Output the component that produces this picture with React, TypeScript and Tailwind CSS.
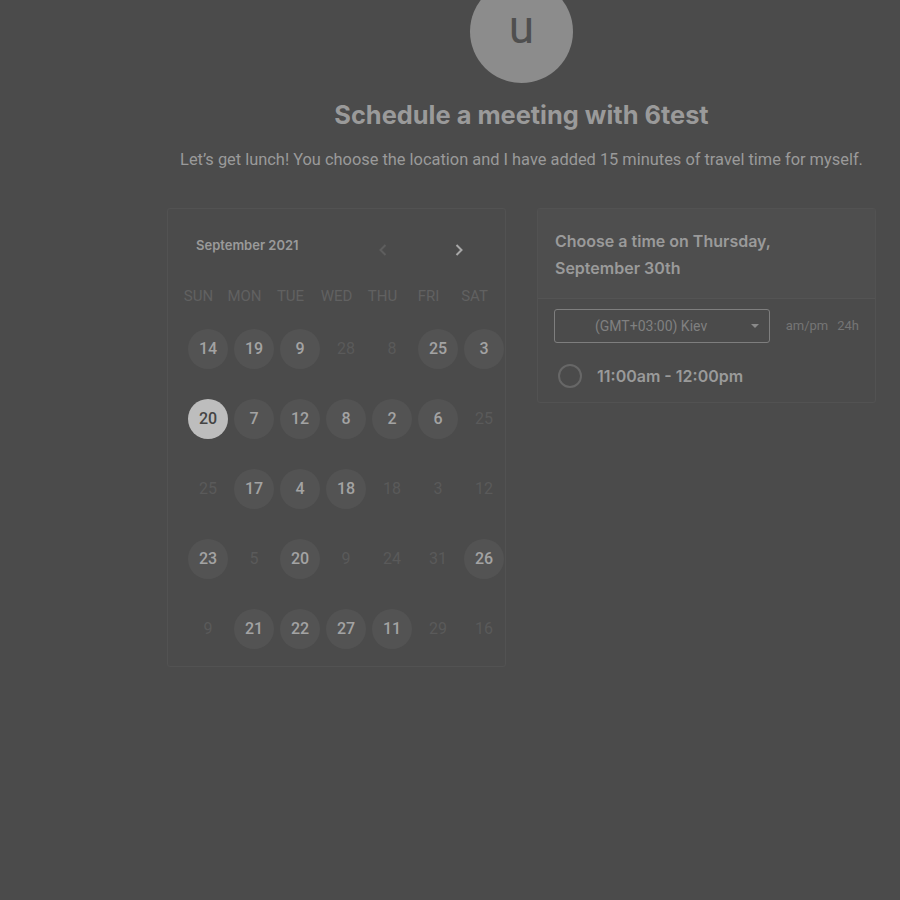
import React from "react";

type Day = { n: number; s: "a" | "u" | "sel" };

const rows: Day[][] = [
  [{ n: 14, s: "a" }, { n: 19, s: "a" }, { n: 9, s: "a" }, { n: 28, s: "u" }, { n: 8, s: "u" }, { n: 25, s: "a" }, { n: 3, s: "a" }],
  [{ n: 20, s: "sel" }, { n: 7, s: "a" }, { n: 12, s: "a" }, { n: 8, s: "a" }, { n: 2, s: "a" }, { n: 6, s: "a" }, { n: 25, s: "u" }],
  [{ n: 25, s: "u" }, { n: 17, s: "a" }, { n: 4, s: "a" }, { n: 18, s: "a" }, { n: 18, s: "u" }, { n: 3, s: "u" }, { n: 12, s: "u" }],
  [{ n: 23, s: "a" }, { n: 5, s: "u" }, { n: 20, s: "a" }, { n: 9, s: "u" }, { n: 24, s: "u" }, { n: 31, s: "u" }, { n: 26, s: "a" }],
  [{ n: 9, s: "u" }, { n: 21, s: "a" }, { n: 22, s: "a" }, { n: 27, s: "a" }, { n: 11, s: "a" }, { n: 29, s: "u" }, { n: 16, s: "u" }],
];

const weekdays = ["SUN", "MON", "TUE", "WED", "THU", "FRI", "SAT"];

function DayCell({ d }: { d: Day }) {
  if (d.s === "sel") {
    return (
      <div className="flex h-[70px] w-[46px] items-center justify-center">
        <div className="flex h-[40px] w-[40px] items-center justify-center rounded-full bg-[#bdbdbd] text-[16px] font-medium text-[#444444]">
          {d.n}
        </div>
      </div>
    );
  }
  if (d.s === "a") {
    return (
      <div className="flex h-[70px] w-[46px] items-center justify-center">
        <div className="flex h-[40px] w-[40px] items-center justify-center rounded-full bg-[#535353] text-[16px] font-medium text-[#a3a3a3]">
          {d.n}
        </div>
      </div>
    );
  }
  return (
    <div className="flex h-[70px] w-[46px] items-center justify-center text-[16px] text-[#5a5a5a]">
      {d.n}
    </div>
  );
}

export default function App() {
  return (
    <div
      className="min-h-[900px] w-[900px] overflow-hidden bg-[#4b4b4b]"
      style={{ fontFamily: "Roboto, 'Liberation Sans', sans-serif" }}
    >
      <div className="ml-[167px] flex w-[709px] flex-col items-center">
        <div className="mt-[-20px] flex h-[103px] w-[103px] items-center justify-center rounded-full bg-[#8c8c8c]">
          <span className="mt-[-10px] text-[46px] leading-none text-[#4f4f4f]">u</span>
        </div>
        <h1
          className="mt-[16px] text-[25.4px] font-bold leading-[32px] text-[#9a9a9a]"
          style={{ fontFamily: "Inter, 'Liberation Sans', sans-serif" }}
        >
          Schedule a meeting with 6test
        </h1>
        <p className="mt-[19px] whitespace-nowrap text-[16.4px] leading-[20px] text-[#9a9a9a]">
          Let’s get lunch! You choose the location and I have added 15 minutes of travel time for myself.
        </p>

        <div className="mt-[38px] flex w-full items-start gap-[31px]">
          {/* Calendar */}
          <div className="h-[459px] w-[339px] rounded-[3px] border border-[#525252]">
            <div className="flex h-[71px] items-center pt-[2px]">
              <span
                className="ml-[28px] text-[13px] font-semibold text-[#9a9a9a]"
                style={{ fontFamily: "Inter, 'Liberation Sans', sans-serif" }}
              >
                September 2021
              </span>
              <svg className="ml-[79px] mt-[8px]" width="10" height="14" viewBox="0 0 10 14">
                <path d="M7.5 2 L2.5 7 L7.5 12" fill="none" stroke="#5e5e5e" strokeWidth="2" />
              </svg>
              <svg className="ml-[66px] mt-[8px]" width="10" height="14" viewBox="0 0 10 14">
                <path d="M2.5 2 L7.5 7 L2.5 12" fill="none" stroke="#a8a8a8" strokeWidth="2" />
              </svg>
            </div>
            <div className="ml-[7.5px] mt-[1px] flex h-[30px] items-center">
              {weekdays.map((w) => (
                <div key={w} className="w-[46px] text-center text-[15px] text-[#616161]">
                  {w}
                </div>
              ))}
            </div>
            <div className="ml-[17px] mt-[3px] flex w-[322px] flex-col">
              {rows.map((r, i) => (
                <div key={i} className="flex">
                  {r.map((d, j) => (
                    <DayCell key={j} d={d} />
                  ))}
                </div>
              ))}
            </div>
          </div>

          {/* Time picker */}
          <div className="w-[339px] rounded-[3px] border border-[#525252]">
            <div
              className="border-b border-[#545454] bg-[#4e4e4e] px-[17px] pb-[16px] pt-[19px] text-[16px] font-semibold leading-[27px] text-[#9a9a9a]"
              style={{ fontFamily: "Inter, 'Liberation Sans', sans-serif" }}
            >
              Choose a time on Thursday,
              <br />
              September 30th
            </div>
            <div className="flex items-center px-[16px] pt-[10px]">
              <div className="relative flex h-[34px] w-[216px] items-center rounded-[3px] border border-[#7e7e7e]">
                <span className="ml-[40px] text-[14px] text-[#808080]">(GMT+03:00) Kiev</span>
                <svg className="absolute right-[10px] top-[14px]" width="8" height="5" viewBox="0 0 8 5">
                  <path d="M0 0 L8 0 L4 4 Z" fill="#8a8a8a" />
                </svg>
              </div>
              <span className="ml-[16px] text-[13px] text-[#757575]">am/pm</span>
              <span className="ml-[9px] text-[13px] text-[#757575]">24h</span>
            </div>
            <div className="flex items-center pb-[14px] pl-[20px] pt-[21px]">
              <div className="h-[24px] w-[24px] rounded-full border-2 border-[#676767]" />
              <span
                className="ml-[15px] text-[16px] font-semibold text-[#9a9a9a]"
                style={{ fontFamily: "Inter, 'Liberation Sans', sans-serif" }}
              >
                11:00am - 12:00pm
              </span>
            </div>
          </div>
        </div>
      </div>
    </div>
  );
}
